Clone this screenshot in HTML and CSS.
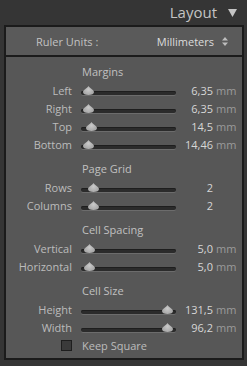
FILE: index.html
```html
<!DOCTYPE html>
<html>
<head>
<meta charset="utf-8">
<link rel="stylesheet" href="styles.css">
</head>
<body>
<div class="header">
  <span class="title">Layout</span>
  <svg class="tri" width="9" height="8" viewBox="0 0 9 8"><path d="M0 0 H9 L4.5 8 Z" fill="#c4c4c4"/></svg>
</div>
<div class="panel">
  <div class="ruler">
    <span class="ruler-label">Ruler Units :</span>
    <span class="ruler-value">Millimeters</span>
    <svg class="updown" width="6" height="9" viewBox="0 0 6 9"><path d="M3 0 L6 3.5 H0 Z M3 9 L6 5.5 H0 Z" fill="#bdbdbd"/></svg>
  </div>
  <div class="content">
    <div class="section">
      <div class="heading">Margins</div>
      <div class="row"><span class="label">Left</span><div class="slider"><span class="thumb" style="left:2px"></span></div><span class="num">6,35</span><span class="unit">mm</span></div>
      <div class="row"><span class="label">Right</span><div class="slider"><span class="thumb" style="left:2px"></span></div><span class="num">6,35</span><span class="unit">mm</span></div>
      <div class="row"><span class="label">Top</span><div class="slider"><span class="thumb" style="left:5px"></span></div><span class="num">14,5</span><span class="unit">mm</span></div>
      <div class="row"><span class="label">Bottom</span><div class="slider"><span class="thumb" style="left:2px"></span></div><span class="num">14,46</span><span class="unit">mm</span></div>
    </div>
    <div class="section">
      <div class="heading">Page Grid</div>
      <div class="row"><span class="label">Rows</span><div class="slider"><span class="thumb" style="left:7px"></span></div><span class="num">2</span><span class="unit"></span></div>
      <div class="row"><span class="label">Columns</span><div class="slider"><span class="thumb" style="left:7px"></span></div><span class="num">2</span><span class="unit"></span></div>
    </div>
    <div class="section">
      <div class="heading">Cell Spacing</div>
      <div class="row"><span class="label">Vertical</span><div class="slider"><span class="thumb" style="left:3px"></span></div><span class="num">5,0</span><span class="unit">mm</span></div>
      <div class="row"><span class="label">Horizontal</span><div class="slider"><span class="thumb" style="left:3px"></span></div><span class="num">5,0</span><span class="unit">mm</span></div>
    </div>
    <div class="section">
      <div class="heading">Cell Size</div>
      <div class="row"><span class="label">Height</span><div class="slider"><span class="thumb" style="left:81px"></span></div><span class="num">131,5</span><span class="unit">mm</span></div>
      <div class="row"><span class="label">Width</span><div class="slider"><span class="thumb" style="left:81px"></span></div><span class="num">96,2</span><span class="unit">mm</span></div>
      <div class="row check-row"><span class="label"><span class="box"></span></span><span class="check-text">Keep Square</span></div>
    </div>
  </div>
</div>
</body>
</html>
```

FILE: styles.css
```css
html, body {
  margin: 0;
  padding: 0;
  background: #353535;
}
body {
  font-family: "Open Sans", "DejaVu Sans", sans-serif;
  font-size: 11px;
  color: #b9b9b9;
  width: 247px;
  height: 366px;
  overflow: hidden;
}
.header {
  height: 25px;
  display: flex;
  justify-content: flex-end;
  align-items: center;
  padding-right: 10px;
  gap: 11px;
}
.title {
  font-size: 15px;
  color: #c4c4c4;
  line-height: 25px;
}
.tri {
  display: block;
  margin-top: 1px;
}
.panel {
  margin: 0 3px 0 4px;
  border: 2px solid #1b1b1b;
  background: #575757;
  height: 331px;
}
.ruler {
  height: 28px;
  display: flex;
  align-items: center;
  border-bottom: 2px solid #1b1b1b;
  background: #5a5a5a;
}
.ruler-label {
  margin-left: 30px;
  color: #c2c2c2;
}
.ruler-value {
  margin-left: auto;
  color: #dcdcdc;
}
.updown {
  display: block;
  margin: 0 14px 0 8px;
}
.content {
  padding-top: 6px;
  display: flex;
  flex-direction: column;
  gap: 7px;
}
.heading {
  height: 18px;
  line-height: 18px;
  padding-left: 76px;
  color: #c0c0c0;
}
.row {
  height: 18px;
  display: flex;
  align-items: center;
}
.label {
  width: 66px;
  text-align: right;
  flex-shrink: 0;
  color: #bcbcbc;
}
.slider {
  position: relative;
  width: 95px;
  height: 4px;
  margin-left: 9px;
  margin-top: 6px;
  border-radius: 2px;
  background: #2b2b2b;
  box-shadow: 0 1px 0 #6c6c6c, inset 0 1px 0 #1e1e1e;
  flex-shrink: 0;
}
.thumb {
  position: absolute;
  top: -5px;
  width: 11px;
  height: 9px;
  background: radial-gradient(circle at 50% 40%, #cacaca 0, #a8a8a8 70%);
  clip-path: path("M5.5 0 C6.5 2 11 4 11 6 C11 8 9 9 5.5 9 C2 9 0 8 0 6 C0 4 4.5 2 5.5 0Z");
}
.num {
  width: 37px;
  text-align: right;
  color: #d6d6d6;
}
.unit {
  margin-left: 3px;
  color: #9b9b9b;
}
.check-row .label {
  display: flex;
  justify-content: flex-end;
}
.box {
  width: 9px;
  height: 9px;
  border: 1px solid #1e1e1e;
  background: #3a3a3a;
  box-sizing: content-box;
}
.check-text {
  margin-left: 10px;
  color: #bcbcbc;
}
```
